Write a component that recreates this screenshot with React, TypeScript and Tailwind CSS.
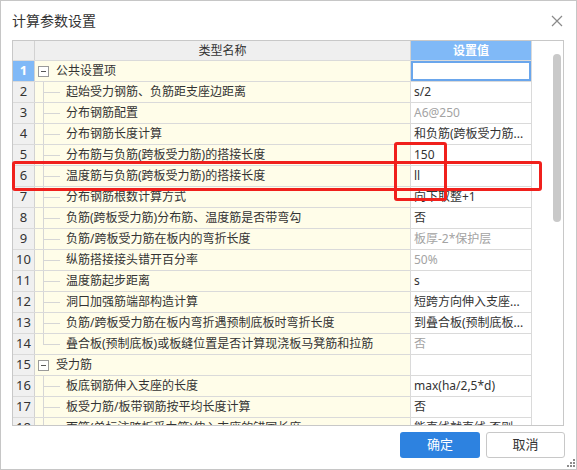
import React from "react"

type Row = {
  n: number
  name: string
  value?: string
  group?: boolean
  last?: boolean
  muted?: boolean
  selected?: boolean
}

const rows: Row[] = [
  { n: 1, name: "公共设置项", group: true, selected: true },
  { n: 2, name: "起始受力钢筋、负筋距支座边距离", value: "s/2" },
  { n: 3, name: "分布钢筋配置", value: "A6@250", muted: true },
  { n: 4, name: "分布钢筋长度计算", value: "和负筋(跨板受力筋..." },
  { n: 5, name: "分布筋与负筋(跨板受力筋)的搭接长度", value: "150" },
  { n: 6, name: "温度筋与负筋(跨板受力筋)的搭接长度", value: "ll" },
  { n: 7, name: "分布钢筋根数计算方式", value: "向下取整+1" },
  { n: 8, name: "负筋(跨板受力筋)分布筋、温度筋是否带弯勾", value: "否" },
  { n: 9, name: "负筋/跨板受力筋在板内的弯折长度", value: "板厚-2*保护层", muted: true },
  { n: 10, name: "纵筋搭接接头错开百分率", value: "50%", muted: true },
  { n: 11, name: "温度筋起步距离", value: "s" },
  { n: 12, name: "洞口加强筋端部构造计算", value: "短跨方向伸入支座..." },
  { n: 13, name: "负筋/跨板受力筋在板内弯折遇预制底板时弯折长度", value: "到叠合板(预制底板..." },
  { n: 14, name: "叠合板(预制底板)或板缝位置是否计算现浇板马凳筋和拉筋", value: "否", muted: true, last: true },
  { n: 15, name: "受力筋", group: true },
  { n: 16, name: "板底钢筋伸入支座的长度", value: "max(ha/2,5*d)" },
  { n: 17, name: "板受力筋/板带钢筋按平均长度计算", value: "否" },
  { n: 18, name: "面筋(单标注跨板受力筋)伸入支座的锚固长度", value: "能直线就直线,否则..." },
]

function TreeGutter({ last }: { last?: boolean }) {
  return (
    <div className="relative ml-[8px] mr-[6px] h-full w-[17px] shrink-0">
      <span className={`absolute left-0 top-0 w-px bg-[#d6d6d6] ${last ? "h-1/2" : "h-full"}`} />
      <span className="absolute left-0 top-1/2 h-px w-[17px] bg-[#d6d6d6]" />
    </div>
  )
}

function GridRow({ row }: { row: Row }) {
  return (
    <div className="flex h-[21px] shrink-0 border-t border-[#dadada]">
      <div
        className={`flex w-[21px] shrink-0 items-center justify-center text-[13px] ${
          row.selected ? "bg-[#80b9f7] font-bold text-white" : "bg-[#f0f0f0] text-[#333]"
        }`}
      >
        {row.n}
      </div>
      <div className="flex w-[376px] shrink-0 items-center overflow-hidden whitespace-nowrap border-l border-[#d2d2d2] bg-[#fffde9] text-[12px] text-[#333]">
        {row.group ? (
          <>
            <span className="ml-[3px] mr-[7px] flex h-[11px] w-[11px] shrink-0 items-center justify-center border border-[#9a9a9a] bg-white">
              <span className="h-px w-[5px] bg-[#555]" />
            </span>
            <span>{row.name}</span>
          </>
        ) : (
          <>
            <TreeGutter last={row.last} />
            <span>{row.name}</span>
          </>
        )}
      </div>
      <div
        className={`flex w-[121px] shrink-0 items-center overflow-hidden whitespace-nowrap border-l border-[#dadada] bg-white pl-[3px] text-[12px] ${
          row.muted ? "text-[#a3a3a3]" : "text-[#333]"
        } ${row.selected ? "shadow-[inset_0_0_0_2px_#6aa6ec]" : ""}`}
      >
        {row.value}
      </div>
    </div>
  )
}

export default function App() {
  return (
    <div className="relative flex h-[470px] w-[577px] flex-col border border-[#c6c6c6] bg-white font-['Noto_Sans','Noto_Sans_CJK_SC',sans-serif] text-[#333]">
      {/* Title bar */}
      <div className="flex h-[39px] shrink-0 items-center justify-between pl-[11px] pr-[13px]">
        <span className="text-[14px] text-[#333]">计算参数设置</span>
        <svg width="12" height="12" viewBox="0 0 12 12" className="text-[#8a8a8a]">
          <path d="M1 1L11 11M11 1L1 11" stroke="currentColor" strokeWidth="1.2" />
        </svg>
      </div>

      {/* Grid */}
      <div className="ml-[11px] flex h-[386px] w-[552px] shrink-0 overflow-hidden border border-[#c8c8c8]">
        <div className="flex w-[518px] shrink-0 flex-col overflow-hidden">
          <div className="flex h-[19px] shrink-0 text-[12px]">
            <div className="w-[21px] shrink-0 bg-[#efefef]" />
            <div className="flex w-[376px] shrink-0 items-center justify-center border-l border-[#d2d2d2] bg-[#efefef] text-[#333]">
              类型名称
            </div>
            <div className="flex w-[121px] shrink-0 items-center justify-center border-l border-[#d2d2d2] bg-[#80b9f7] font-bold text-white">
              设置值
            </div>
          </div>
          {rows.map((r) => (
            <GridRow key={r.n} row={r} />
          ))}
        </div>
        <div className="w-[32px] shrink-0 border-l border-[#dadada] bg-white">
          <div className="ml-[21px] mt-[13px] h-[168px] w-[8px] rounded-full bg-[#c9c9c9]" />
        </div>
      </div>

      {/* Footer */}
      <div className="flex shrink-0 justify-end gap-[6px] pr-[11px] pt-[6px]">
        <button className="flex h-[26px] w-[80px] items-center justify-center rounded-[3px] bg-[#2d82e0] text-[13px] text-white">
          确定
        </button>
        <button className="flex h-[26px] w-[79px] items-center justify-center rounded-[3px] border border-[#c8c8c8] bg-white text-[13px] text-[#333]">
          取消
        </button>
      </div>

      {/* Resize grip */}
      <svg width="9" height="9" viewBox="0 0 9 9" className="absolute bottom-[2px] right-[1px] text-[#8c8c8c]">
        <rect x="7" y="1" width="2" height="2" fill="currentColor" />
        <rect x="4" y="4" width="2" height="2" fill="currentColor" />
        <rect x="7" y="4" width="2" height="2" fill="currentColor" />
        <rect x="1" y="7" width="2" height="2" fill="currentColor" />
        <rect x="4" y="7" width="2" height="2" fill="currentColor" />
        <rect x="7" y="7" width="2" height="2" fill="currentColor" />
      </svg>

      {/* Red annotation boxes */}
      <div className="pointer-events-none absolute left-[393px] top-[141px] h-[59px] w-[53px] rounded-[3px] border-[3px] border-[#f0201c]" />
      <div className="pointer-events-none absolute left-[11px] top-[160px] h-[30px] w-[530px] rounded-[3px] border-[3px] border-[#f0201c]" />
    </div>
  )
}
